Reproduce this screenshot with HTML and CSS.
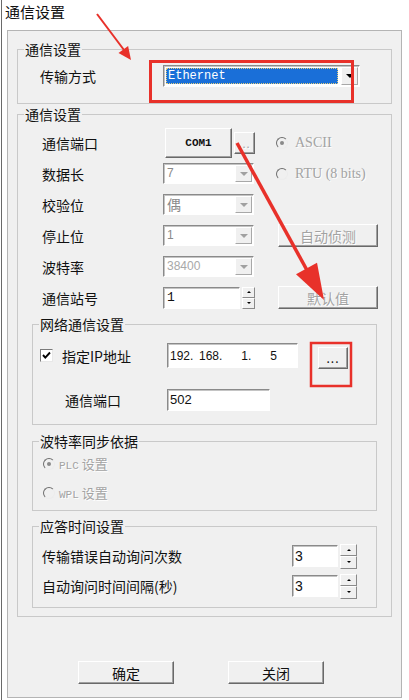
FILE: index.html
```html
<!DOCTYPE html>
<html>
	<head>
		<meta charset="UTF-8">
		<meta name="viewport" content="width=device-width, initial-scale=1.0">
		<title>通信设置</title>
		<link rel="stylesheet" href="styles.css">
	</head>
	<body>
		<div class="window">
			<h3 class="title">通信设置</h3>
			<div class="panel">
				<!-- 传输方式 -->
				<fieldset class="group">
					<legend>通信设置</legend>
					<div class="inner mode">
						<span class="label">传输方式</span>
						<div class="combo wide">
							<span class="val"><i class="sel">Ethernet</i></span>
							<span class="arrow on"></span>
						</div>
					</div>
				</fieldset>
				<!-- 通信参数 -->
				<fieldset class="group g2">
					<legend>通信设置</legend>
					<div class="inner">
						<div class="grid">
							<span class="label">通信端口</span>
							<div class="port">
								<span class="btn com">COM1</span>
								<span class="btn more off">...</span>
							</div>
							<span class="opt off"><span class="radio on"></span><span class="serif">ASCII</span></span>

							<span class="label">数据长</span>
							<div class="combo off"><span class="val">7</span><span class="arrow"></span></div>
							<span class="opt off"><span class="radio"></span><span class="serif">RTU (8 bits)</span></span>

							<span class="label">校验位</span>
							<div class="combo off"><span class="val cjk">偶</span><span class="arrow"></span></div>
							<span></span>

							<span class="label">停止位</span>
							<div class="combo off"><span class="val">1</span><span class="arrow"></span></div>
							<span class="btn side off">自动侦测</span>

							<span class="label">波特率</span>
							<div class="combo off"><span class="val light">38400</span><span class="arrow"></span></div>
							<span></span>

							<span class="label">通信站号</span>
							<div class="spin">
								<span class="field station">1</span>
								<span class="updown"><i class="up"></i><i class="down"></i></span>
							</div>
							<span class="btn side off">默认值</span>
						</div>

						<fieldset class="group net">
							<legend>网络通信设置</legend>
							<div class="inner">
								<div class="net-row">
									<span class="chk">
										<span class="check"><svg width="11" height="11" viewBox="0 0 11 11"><path d="M2 5l2.3 2.6L9 2.5" fill="none" stroke="#000" stroke-width="1.9"/></svg></span>
										指定IP地址
									</span>
									<div class="field ip"><span>192</span><b>.</b><span>168</span><b>.</b><span>1</span><b>.</b><span>5</span></div>
									<span class="btn pick">...</span>
								</div>
								<div class="net-row">
									<span class="label">通信端口</span>
									<div class="field num">502</div>
								</div>
							</div>
						</fieldset>

						<fieldset class="group baud">
							<legend>波特率同步依据</legend>
							<div class="inner">
								<div class="opt small off"><span class="radio on"></span><span><b class="mono">PLC</b> 设置</span></div>
								<div class="opt small off"><span class="radio"></span><span><b class="mono">WPL</b> 设置</span></div>
							</div>
						</fieldset>

						<fieldset class="group reply">
							<legend>应答时间设置</legend>
							<div class="inner">
								<div class="reply-row">
									<span class="label">传输错误自动询问次数</span>
									<div class="spin">
										<span class="field">3</span>
										<span class="updown"><i class="up"></i><i class="down"></i></span>
									</div>
								</div>
								<div class="reply-row">
									<span class="label">自动询问时间间隔(秒)</span>
									<div class="spin">
										<span class="field">3</span>
										<span class="updown"><i class="up"></i><i class="down"></i></span>
									</div>
								</div>
							</div>
						</fieldset>
					</div>
				</fieldset>

				<div class="actions">
					<span class="btn act">确定</span>
					<span class="btn act">关闭</span>
				</div>
			</div>
		</div>

		<!-- 红色标注 -->
		<svg class="marks" width="409" height="700" viewBox="0 0 409 700">
			<rect x="150.5" y="61.5" width="202" height="40" fill="none" stroke="#e8312a" stroke-width="3"/>
			<rect x="311" y="343" width="40" height="43" fill="none" stroke="#e8312a" stroke-width="2.5"/>
			<line x1="97" y1="14" x2="124" y2="50" stroke="#e8312a" stroke-width="2"/>
			<polygon points="131,60 118.5,53.1 128.1,45.9" fill="#e8312a"/>
			<line x1="237" y1="143" x2="308" y2="272" stroke="#e8312a" stroke-width="3.5"/>
			<polygon points="324,300 296,274.3 317,262.7" fill="#e8312a"/>
		</svg>
	</body>
</html>
```

FILE: styles.css
```css
*{
	margin: 0;
	padding: 0;
	box-sizing: border-box;
}
body{
	position: relative;
	width: 409px;
	height: 700px;
	overflow: hidden;
	background: #fff;
	font-family: "Noto Sans CJK SC", sans-serif;
	font-size: 14px;
	color: #111;
}
.window{
	height: 700px;
	margin-left: 1px;
	border-left: 1px solid #6a6a6a;
}
.title{
	height: 30px;
	padding-left: 3px;
	font-size: 15px;
	font-weight: normal;
	line-height: 24px;
}
.panel{
	width: 395px;
	height: 668px;
	margin-left: 5px;
	padding: 10px 9px 0;
	background: #f0f0f0;
	border: 1px solid #b4b4b4;
}
/* 分组框 */
.group{
	padding: 0;
	min-width: 0;
	border: 1px solid #c9c9c9;
}
.group legend{
	margin-left: 6px;
	padding: 0 1px;
	line-height: 16px;
}
.label{
	line-height: 16px;
}
.mode{
	display: flex;
	align-items: center;
	padding: 8px 0 16px 22px;
}
.mode .label{
	width: 123px;
}
.g2{
	margin-top: 2px;
}
.g2 > .inner{
	padding: 5px 14px 8px;
}
.grid{
	display: grid;
	grid-template-columns: 131px 113px 1fr;
	grid-auto-rows: 31px;
	align-items: center;
}
.grid .label{
	padding-left: 10px;
}
/* 下拉框 */
.combo{
	display: flex;
	width: 91px;
	height: 21px;
	background: #fff;
	border: 1px solid;
	border-color: #8a8a8a #fff #fff #8a8a8a;
	box-shadow: inset 1px 1px #c4c4c4;
}
.val{
	flex: 1;
	padding-left: 3px;
	font-family: "Liberation Sans", sans-serif;
	font-size: 12px;
	line-height: 19px;
	color: #8a8a8a;
}
.val.cjk{
	font-family: "Noto Sans CJK SC", sans-serif;
	font-size: 14px;
}
.val.light{
	color: #a8a8a8;
}
.arrow{
	display: flex;
	align-items: center;
	justify-content: center;
	width: 17px;
	margin: 1px;
	background: #f0f0f0;
	border: 1px solid;
	border-color: #fff #a8a8a8 #a8a8a8 #fff;
}
.arrow::after{
	content: "";
	border-style: solid;
	border-width: 4px 4px 0;
	border-color: #a0a0a0 transparent transparent;
}
.arrow.on::after{
	border-top-color: #000;
}
.wide{
	width: 197px;
	height: 22px;
}
.wide .val{
	padding: 2px;
}
.sel{
	display: block;
	height: 100%;
	padding-left: 2px;
	background: #1a6fd8;
	color: #fff;
	font-style: normal;
	font-family: "Liberation Mono", monospace;
	font-size: 12px;
	line-height: 16px;
	outline: 1px dotted #e6cf7c;
	outline-offset: -1px;
}
/* 按钮 */
.btn{
	display: flex;
	align-items: center;
	justify-content: center;
	background: #f0f0f0;
	border: 1px solid;
	border-color: #fff #696969 #696969 #fff;
	box-shadow: inset -1px -1px #a0a0a0;
	line-height: 16px;
}
.off{
	color: #a3a3a3;
	text-shadow: 1px 1px 0 #fff;
}
.port{
	display: flex;
	align-items: center;
	gap: 2px;
	margin-left: 2px;
}
.com{
	width: 67px;
	height: 30px;
	font-family: "Liberation Mono", monospace;
	font-weight: bold;
	font-size: 11px;
	color: #111;
}
.more{
	width: 21px;
	height: 22px;
	font-size: 11px;
	letter-spacing: 1px;
}
.side{
	width: 100px;
	height: 23px;
	margin-left: 2px;
}
/* 单选 */
.opt{
	display: flex;
	align-items: center;
	gap: 7px;
}
.serif{
	font-family: "Liberation Serif", serif;
	font-size: 14px;
}
.radio{
	display: flex;
	flex: none;
	align-items: center;
	justify-content: center;
	width: 12px;
	height: 12px;
	border-radius: 50%;
	border: 1px solid;
	border-color: #6e6e6e #ececec #ececec #6e6e6e;
	background: #f0f0f0;
}
.radio.on::after{
	content: "";
	width: 4px;
	height: 4px;
	border-radius: 50%;
	background: #8a8a8a;
}
/* 输入框 */
.field{
	background: #fff;
	border: 1px solid;
	border-color: #8a8a8a #fff #fff #8a8a8a;
	box-shadow: inset 1px 1px #c4c4c4;
}
.spin{
	display: flex;
	align-items: center;
	gap: 2px;
}
.station{
	width: 77px;
	height: 22px;
	padding-left: 3px;
	font-family: "Liberation Mono", monospace;
	font-size: 13px;
	line-height: 20px;
}
.updown{
	display: flex;
	flex-direction: column;
	width: 13px;
	height: 22px;
}
.updown i{
	display: flex;
	flex: 1;
	align-items: center;
	justify-content: center;
	background: #f0f0f0;
	border: 1px solid;
	border-color: #fff #8a8a8a #8a8a8a #fff;
}
.updown .up::after{
	content: "";
	border-style: solid;
	border-width: 0 2px 2px;
	border-color: transparent transparent #000;
}
.updown .down::after{
	content: "";
	border-style: solid;
	border-width: 2px 2px 0;
	border-color: #000 transparent transparent;
}
/* 网络通信设置 */
.net{
	margin-top: 3px;
}
.net .inner{
	padding: 11px 0 13px 7px;
}
.net-row{
	display: flex;
	align-items: flex-start;
	height: 25px;
}
.net-row + .net-row{
	height: 22px;
	margin-top: 21px;
	align-items: center;
}
.chk{
	display: flex;
	align-items: center;
	gap: 9px;
	width: 127px;
	height: 25px;
	line-height: 16px;
}
.check{
	display: flex;
	align-items: center;
	justify-content: center;
	width: 13px;
	height: 13px;
	background: #fff;
	border: 1px solid;
	border-color: #7a7a7a #e8e8e8 #e8e8e8 #7a7a7a;
}
.ip{
	display: flex;
	align-items: center;
	width: 131px;
	height: 25px;
	font-family: "Liberation Sans", sans-serif;
	font-size: 12px;
}
.ip span{
	width: 22px;
	text-align: right;
}
.ip b{
	width: 7px;
	font-weight: normal;
}
.pick{
	width: 30px;
	height: 22px;
	margin: 4px 0 0 20px;
	font-size: 12px;
	letter-spacing: 1px;
}
.net .label{
	width: 127px;
	padding-left: 25px;
}
.num{
	width: 103px;
	height: 22px;
	padding-left: 2px;
	font-family: "Liberation Sans", sans-serif;
	font-size: 13px;
	line-height: 20px;
}
/* 波特率同步依据 */
.baud{
	margin-top: 8px;
}
.baud .inner{
	padding: 0 0 3px 10px;
}
.small{
	height: 29px;
	gap: 4px;
	font-size: 13px;
}
.mono{
	font-family: "Liberation Mono", monospace;
	font-size: 11px;
	font-weight: normal;
}
/* 应答时间设置 */
.reply{
	margin-top: 7px;
}
.reply .inner{
	padding: 7px 0 6px 9px;
}
.reply-row{
	display: flex;
	align-items: center;
	height: 30px;
}
.reply-row .label{
	width: 250px;
}
.reply .field{
	width: 46px;
	height: 22px;
	padding-left: 2px;
	font-family: "Liberation Sans", sans-serif;
	font-size: 14px;
	line-height: 20px;
}
.reply .updown{
	width: 17px;
	height: 25px;
}
.actions{
	display: flex;
	gap: 54px;
	margin-top: 44px;
	padding-left: 61px;
}
.act{
	width: 96px;
	height: 23px;
	color: #111;
}
.marks{
	position: absolute;
	top: 0;
	left: 0;
	pointer-events: none;
}
```
